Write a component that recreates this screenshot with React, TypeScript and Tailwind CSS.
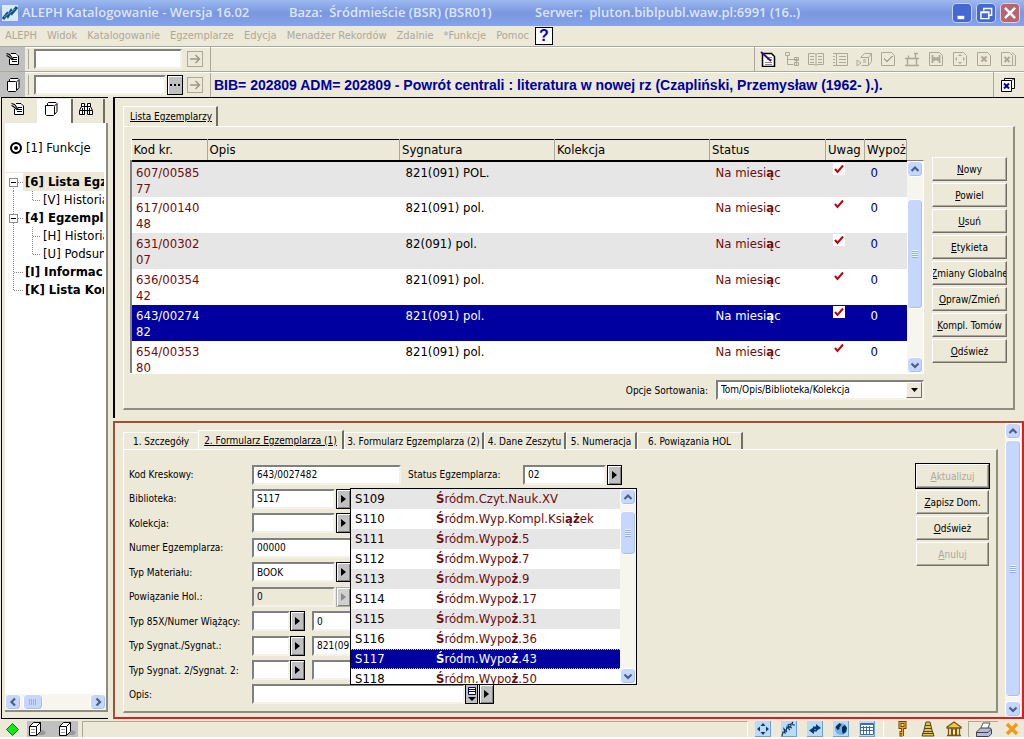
import React from "react";
import type { ReactNode } from "react";

const raised =
  "border border-t-white border-l-white border-r-[#716f64] border-b-[#716f64]";
const field =
  "h-5 min-w-0 rounded-none border-2 border-t-[#808080] border-l-[#808080] border-r-[#f4f2e8] border-b-[#f4f2e8] bg-white px-[3px] text-[10px] leading-4 text-black outline-none";

/* The raster UI font draws some Polish letters heavier than the rest. */
function Polish({ children }: { children: string }) {
  return (
    <>
      {children.split(/([ążŚ]+)/).map((part, i) =>
        i % 2 ? (
          <b key={i}>{part}</b>
        ) : (
          <React.Fragment key={i}>{part}</React.Fragment>
        ),
      )}
    </>
  );
}

function Svg({
  children,
  className = "size-4",
  box = "0 0 16 16",
}: {
  children: ReactNode;
  className?: string;
  box?: string;
}) {
  return (
    <svg
      viewBox={box}
      className={`shrink-0 ${className}`}
      fill="none"
      stroke="currentColor"
      strokeWidth="1"
      aria-hidden="true"
    >
      {children}
    </svg>
  );
}

const NoteIcon = () => (
  <Svg>
    <path d="M6 2.500h7.500v11h-9V8" fill="#fff" stroke="none" />
    <path d="M6 2.500h5l2.500 2.500v8.500h-9V8M8 6.500h4M7 8.500h5M7 10.500h5" />
    <path d="M1.500 2.500l3 1 4 5M1.500 4.500l2 1 4 3.500" strokeWidth="1.200" />
  </Svg>
);
const PagesIcon = () => (
  <Svg>
    <path d="M4.500 4.500v-2l1-1h7.500l1 1v8l-2 2.500" fill="#fff" />
    <path d="M2.500 4.500h8l1 1v8l-1 1h-7l-1-1z" fill="#fff" />
    <path d="M11.500 5l2-2" />
  </Svg>
);
const BinocularsIcon = () => (
  <Svg>
    <path d="M3.500 2.500h3v3h3v-3h3v3l2 4v4h-5v-4h-3v4h-5v-4l2-4z" fill="#fff" />
    <path d="M3 5.500h4M9 5.500h4M2 9.500h5M9 9.500h5M6.500 6v4M9.500 6v4M4.500 7v6M11.500 7v6" />
  </Svg>
);
const CubeIcon = () => (
  <Svg className="h-4 w-5" box="0 0 20 16">
    <path d="M11 14h6l2-3-4-2z" fill="#999" stroke="none" />
    <path d="M2.500 5.500l4-4h7v9l-4 4h-7z" fill="#fff" />
    <path d="M2.500 5.500h7v9M9.500 5.500l4-4" />
    <path d="M4 8.500h4M4 11.500h4" stroke="#999" />
  </Svg>
);

const toolbarIcons: { name: string; art: ReactNode }[] = [
  { name: "Drzewo", art: <path d="M1.500 1.500h4v3h-4zM3.500 5v8.500h6M4 8.500h6M10.500 6.500h4v3h-4zM10.500 11.500h4v3h-4zM12.500 6v9M10 8.500h5" /> },
  { name: "Książka", art: <path d="M.5 2.500h6l1.500 1 1.500-1h6v11h-6l-1.500 1-1.500-1h-6zM8 3v11M2 5.500h4M2 8.500h4M2 11.500h4M10 5.500h4M10 8.500h4M10 11.500h4" /> },
  { name: "Lista", art: <path d="M1 2.500h14.500v12H1M4.500 2v12M1 5.500h2M1 8.500h2M1 11.500h2M7 5.500h7M7 8.500h7M7 11.500h7" /> },
  { name: "Egzemplarz", art: <path d="M4.500 6.500l4-4h7v8l-3 4h-7M12.500 6.500l3-4M5 6.500h7.500v8M1 9l4 3-4 3zM7 9h3M7 11h3" /> },
  { name: "Sprawdź", art: <path d="M1.500 1.500h10l3 3v10h-13zM4 8l3 3 6-6M4 7l3 3 5-5" /> },
  { name: "Połącz", art: <path d="M1 7.500h14M3.500 8v6.500h9V8M4.500 7V4.500M11.500 7V2M10 2.500h4M1 14.500h4M11 14.500h4" strokeWidth="1.400" /> },
  { name: "Szukaj", art: <><path d="M1.500 1.500h10l3 3v10h-13z" /><path d="M4.500 4v8M11.500 4v8M6.500 6v4M9.500 6v4M6 8h4" strokeWidth="1.800" /></> },
  { name: "Przenieś", art: <><path d="M1.500 1.500h10l3 3v10h-13z" /><path d="M8 3l2 2H6zM8 13l2-2H6zM3 8l2-2v4zM13 8l-2-2v4z" fill="currentColor" stroke="none" /></> },
  { name: "Usuń", art: <><path d="M1.500 1.500h10l3 3v10h-13z" /><path d="M5.500 5.500l5 5M10.500 5.500l-5 5" strokeWidth="2" /></> },
  { name: "Usuń wszystkie", art: <><path d="M1.500 1.500h8l3 3v10h-11zM12 1.500l3.500 3v10h-2" /><path d="M4.500 6l5 5M9.500 6l-5 5" strokeWidth="2" /></> },
];

const xpBlue = "border border-white bg-[#c6d6fc] shadow-[inset_-1px_-1px_0_#a9bff0]";

function ScrollButton({ dir, label }: { dir: "up" | "down" | "left" | "right"; label: string }) {
  const d = {
    up: "M3.500 9L7 5.500 10.500 9",
    down: "M3.500 5.500L7 9l3.500-3.500",
    left: "M9 3.500L5.500 7 9 10.500",
    right: "M5.500 3.500L9 7l-3.500 3.500",
  }[dir];
  return (
    <button aria-label={label} className={`flex size-4 shrink-0 items-center justify-center rounded-sm ${xpBlue}`}>
      <Svg className="size-3.5" box="0 0 14 14">
        <path d={d} stroke="#45608c" strokeWidth="2.200" />
      </Svg>
    </button>
  );
}

function VScroll({ thumb }: { thumb: string }) {
  return (
    <div className="flex w-4 shrink-0 flex-col bg-[#f6f5ee]">
      <ScrollButton dir="up" label="W górę" />
      <div className="min-h-0 flex-1">
        <div className={`flex items-center justify-center rounded-sm ${xpBlue} ${thumb}`}>
          <Svg className="h-2 w-1.5" box="0 0 6 8">
            <path d="M0 .5h6M0 2.500h6M0 4.500h6M0 6.500h6" stroke="#eef4fe" />
            <path d="M0 1.500h6M0 3.500h6M0 5.500h6M0 7.500h6" stroke="#8cb0f8" />
          </Svg>
        </div>
      </div>
      <ScrollButton dir="down" label="W dół" />
    </div>
  );
}

function GoButton() {
  return (
    <button aria-label="Przejdź" className="flex size-4 items-center justify-center border border-[#aca899] text-[#9c998a]">
      <Svg className="size-3.5" box="0 0 14 14">
        <path d="M2 7h9M7.500 3l4 4-4 4" strokeWidth="1.500" />
      </Svg>
    </button>
  );
}

function PickButton({ label, disabled }: { label: string; disabled?: boolean }) {
  return (
    <button
      aria-label={label}
      disabled={disabled}
      className={`flex h-5 w-[15px] shrink-0 items-center justify-center border shadow-[inset_1px_1px_0_#fff,inset_-1px_-1px_0_#808080] ${
        disabled ? "border-[#aaa] bg-[#d0d0d0] text-[#8a8a8a]" : "border-black bg-[#c0c0c0] text-black"
      }`}
    >
      <Svg className="h-2 w-1.5" box="0 0 6 8">
        <path d="M0 0l5 4-5 4z" fill="currentColor" stroke="none" />
      </Svg>
    </button>
  );
}

function PushButton({ text, disabled, primary }: { text: string; disabled?: boolean; primary?: boolean }) {
  return (
    <button
      disabled={disabled}
      className={`flex h-6 w-full items-center justify-center overflow-hidden bg-[#ece9d8] text-[10px] whitespace-nowrap shadow-[inset_-1px_-1px_0_#aca899] ${raised} ${
        primary ? "outline outline-black" : ""
      } ${disabled ? "text-[#aca899]" : "text-black"}`}
    >
      <span>
        <u>{text[0]}</u>
        {text.slice(1)}
      </span>
    </button>
  );
}

const items = [
  ["607/00585", "77", "821(091) POL."],
  ["617/00140", "48", "821(091) pol."],
  ["631/00302", "07", "82(091) pol."],
  ["636/00354", "42", "821(091) pol."],
  ["643/00274", "82", "821(091) pol."],
  ["654/00353", "80", "821(091) pol."],
];

const branches = [
  ["S109", "Śródm.Czyt.Nauk.XV"],
  ["S110", "Śródm.Wyp.Kompl.Książek"],
  ["S111", "Śródm.Wypoż.5"],
  ["S112", "Śródm.Wypoż.7"],
  ["S113", "Śródm.Wypoż.9"],
  ["S114", "Śródm.Wypoż.17"],
  ["S115", "Śródm.Wypoż.31"],
  ["S116", "Śródm.Wypoż.36"],
  ["S117", "Śródm.Wypoż.43"],
  ["S118", "Śródm.Wypoż.50"],
];

const tree = [
  { text: "[6] Lista Egz", art: "box", root: true, active: true },
  { text: "[V] Historia", art: "last" },
  { text: "[4] Egzempla", art: "box", root: true },
  { text: "[H] Historia", art: "mid" },
  { text: "[U] Podsum", art: "last" },
  { text: "[I] Informac", art: "leaf", root: true },
  { text: "[K] Lista Kon", art: "end", root: true },
];

function TreeArt({ kind, first }: { kind: string; first?: boolean }) {
  const child = kind === "mid" || kind === "last";
  return (
    <Svg className={child ? "h-[18px] w-9" : "h-[18px] w-[18px]"} box={child ? "0 0 36 18" : "0 0 18 18"}>
      <g stroke="#8c8c8c" strokeDasharray="1 1">
        <path d={first ? "M8.500 9v9" : kind === "end" ? "M8.500 0v9" : "M8.500 0v18"} />
        {child ? (
          <path d={kind === "mid" ? "M27.500 0v18M28 9.500h8" : "M27.500 0v9M28 9.500h8"} />
        ) : (
          <path d="M9 9.500h9" />
        )}
      </g>
      {kind === "box" && (
        <>
          <rect x="4.500" y="5.500" width="8" height="8" fill="#fff" stroke="#8c8c8c" />
          <path d="M6 9.500h5" stroke="#000" />
        </>
      )}
    </Svg>
  );
}

const menu = ["ALEPH", "Widok", "Katalogowanie", "Egzemplarze", "Edycja", "Menadżer Rekordów", "Zdalnie", "*Funkcje", "Pomoc"];

function TitleBar() {
  return (
    <header className="flex h-[26px] items-center bg-linear-to-b from-[#9db9f0] via-[#7a96df] to-[#85a4ec] pr-1 pl-0.5 font-['Open_Sans',sans-serif] text-[13px] font-semibold whitespace-pre text-[#dbe7fb]">
      <Svg className="size-4">
        <rect width="16" height="16" fill="#d5ecf8" stroke="none" />
        <path d="M1 14l4-5 1 2 3-5 1 2 5-6" stroke="#164f83" strokeWidth="3" />
        <path d="M2 12l11-8" stroke="#67a5d0" />
      </Svg>
      <h1 className="flex flex-1">
        <span className="w-[267px] pl-1">ALEPH Katalogowanie - Wersja 16.02</span>
        <span className="w-[246px] pl-1">Baza:  Śródmieście (BSR) (BSR01)</span>
        <span className="pl-1">Serwer:  pluton.biblpubl.waw.pl:6991 (16..)</span>
      </h1>
      <div className="flex gap-1">
        <button aria-label="Minimalizuj" className="size-5 rounded-sm border border-[#c5d4f7] bg-[#4668d2]">
          <Svg className="size-[18px]"><path d="M4 12h6" stroke="#fff" strokeWidth="3" /></Svg>
        </button>
        <button aria-label="Przywróć" className="size-5 rounded-sm border border-[#c5d4f7] bg-[#4668d2]">
          <Svg className="size-[18px]"><path d="M6 6V4h7v6h-2M3.500 7h7v6h-7zM3 7.500h8" stroke="#fff" strokeWidth="1.300" /></Svg>
        </button>
        <button aria-label="Zamknij" className="size-5 rounded-sm border border-[#e3cfdc] bg-[#b6646e]">
          <Svg className="size-[18px]"><path d="M3.500 3.500l9 9M12.500 3.500l-9 9" stroke="#fff" strokeWidth="2.200" /></Svg>
        </button>
      </div>
    </header>
  );
}

const line = "border-b border-[#aca899] shadow-[0_1px_0_#fff]";

function Toolbars() {
  return (
    <>
      <nav className={`flex h-[21px] items-center gap-2.5 pl-[5px] text-[11px] whitespace-nowrap text-[#aca899] ${line}`}>
        {menu.map((m) => (
          <button key={m}>{m}</button>
        ))}
        <button aria-label="Kontekstowa" className="-ml-1 flex size-[18px] items-center justify-center border border-black bg-white font-['Liberation_Sans',sans-serif] text-base font-bold text-[#0000c0]">
          ?
        </button>
      </nav>
      <div className={`flex h-[25px] items-center ${line}`}>
        <span className="flex h-full w-[25px] items-center justify-center bg-[#c0c0c0]"><NoteIcon /></span>
        <span className="ml-[3px] h-5 w-px bg-[#aca899]" />
        <input aria-label="Rekord" className={`mr-[5px] ml-[5px] w-[148px] ${field}`} />
        <GoButton />
        <span className="ml-[7px] h-6 w-px bg-[#aca899]" />
        <div className="ml-auto flex h-full items-center gap-2 border-l border-[#aca899] pr-2 pl-[5px] text-[#aca899]">
          <button aria-label="Edytuj" className="text-black">
            <Svg>
              <path d="M2.500 2.500h9l3 3v10h-12z" fill="#fff" strokeWidth="1.500" />
              <path d="M6 6.500h6M7 8.500h5M5 11.500h7M5 13.500h7" stroke="#888" />
              <path d="M1 1l10 9" stroke="#3a1080" strokeWidth="2" />
            </Svg>
          </button>
          {toolbarIcons.map((t) => (
            <button key={t.name} aria-label={t.name} disabled><Svg>{t.art}</Svg></button>
          ))}
        </div>
      </div>
      <div className="flex h-[25px] items-center">
        <span className="flex h-full w-[25px] items-center justify-center bg-[#c0c0c0]"><PagesIcon /></span>
        <span className="ml-[3px] h-5 w-px bg-[#aca899]" />
        <input aria-label="Egzemplarz" className={`ml-[5px] w-[132px] ${field}`} />
        <button aria-label="Wybierz" className="mr-1 ml-px flex h-5 w-4 items-center justify-center border border-black bg-[#c0c0c0] shadow-[inset_1px_1px_0_#fff]">
          <Svg className="size-3" box="0 0 12 12"><path d="M1 6h2M5 6h2M9 6h2" strokeWidth="2" /></Svg>
        </button>
        <GoButton />
        <span className="ml-[7px] h-6 w-px bg-[#aca899]" />
        <p className="pl-[3px] font-['Liberation_Sans',sans-serif] text-sm font-bold whitespace-nowrap text-[#0000a0]">
          BIB= 202809 ADM= 202809 - Powrót centrali : literatura w nowej rz (Czapliński, Przemysław (1962- ).).
        </p>
        <div className="ml-auto flex h-full items-center border-l border-[#aca899] pr-2 pl-1.5">
          <button aria-label="Zamknij rekord">
            <Svg>
              <path d="M4.500 3.500v-2h10v10h-3M1.500 3.500h10v11h-10zM12 3.500l2-2" fill="#fff" />
              <path d="M4 6.500l5 5M9 6.500l-5 5" stroke="#0000a0" strokeWidth="2" />
            </Svg>
          </button>
        </div>
      </div>
    </>
  );
}

function Navigator() {
  return (
    <aside className="flex w-[107px] shrink-0 flex-col border-t border-b border-l border-black">
      <div className="flex flex-1 flex-col pb-1.5 pl-[3px]">
        <div className="flex h-[25px] pt-px">
          <button aria-label="Rekord" className="w-8 pb-1 pl-[5px]"><NoteIcon /></button>
          <button aria-label="Egzemplarze" className="w-9 border-r-2 border-[#716f64] bg-white pb-1 pl-1.5"><PagesIcon /></button>
          <button aria-label="Szukaj" className="w-8 border-r-2 border-[#716f64] pb-1 pl-[5px]"><BinocularsIcon /></button>
        </div>
        <div className="flex flex-1 flex-col border-r-2 border-b-2 border-[#8f8d80] bg-white">
          <label className="mt-4 flex h-[18px] items-center gap-1 pl-[5px] text-[13px]">
            <input
              type="radio"
              name="funkcje"
              defaultChecked
              className="size-3 shrink-0 appearance-none rounded-full border-2 border-black bg-black shadow-[inset_0_0_0_2px_#fff]"
            />
            [1] Funkcje
          </label>
          <ul className="mt-[15px] w-[99px] flex-1 overflow-hidden border-t border-[#ece9d8] text-[13px]">
            {tree.map((t, i) => (
              <li key={t.text} className={`flex h-[18px] items-center whitespace-nowrap ${t.root ? "font-bold" : ""}`}>
                <TreeArt kind={t.art} first={i === 0} />
                <a href="#" className={`flex-1 pl-0.5 leading-[18px] ${t.active ? "bg-[#ece9d8]" : ""}`}>{t.text}</a>
              </li>
            ))}
          </ul>
          <div className="flex h-4 bg-[#f6f5ee]">
            <ScrollButton dir="left" label="W lewo" />
            <div className={`ml-0.5 flex w-5 items-center justify-center rounded-sm ${xpBlue}`}>
              <Svg className="h-1.5 w-2" box="0 0 8 6"><path d="M.5 0v6M2.500 0v6M4.500 0v6M6.500 0v6" stroke="#8cb0f8" /></Svg>
            </div>
            <span className="flex-1" />
            <ScrollButton dir="right" label="W prawo" />
          </div>
        </div>
      </div>
    </aside>
  );
}

const groupBox = "border-t border-l border-r-2 border-b-2 border-t-white border-l-white border-r-[#8f8d80] border-b-[#8f8d80]";

function ItemList() {
  const head = "border-r border-r-[#aca899] border-l border-l-white pl-0.5 text-left font-normal";
  return (
    <section className="border-t border-l-2 border-black pt-2 pr-[9px] pb-2 pl-2">
      <div className="flex">
        <button className="h-5 border-t border-r-2 border-l border-t-white border-r-[#716f64] border-l-white pr-1 pl-1.5 text-[10px] underline">
          Lista Egzemplarzy
        </button>
      </div>
      <div className={`flex gap-2 px-1.5 pt-3 pb-2 ${groupBox}`}>
        <div className="min-w-0 flex-1">
          <div className="flex h-[235px] border-b border-white">
            <div className="min-w-0 flex-1 overflow-hidden">
              <table className="w-full table-fixed border-collapse text-[13px]">
                <colgroup>
                  <col className="w-[76px]" />
                  <col />
                  <col className="w-[155px]" />
                  <col className="w-[155px]" />
                  <col className="w-[116px]" />
                  <col className="w-[39px]" />
                  <col className="w-[42px]" />
                </colgroup>
                <thead>
                  <tr className="h-[21px] border border-b-2 border-black leading-[17px] whitespace-nowrap">
                    {["Kod kr.", "Opis", "Sygnatura", "Kolekcja", "Status", "Uwag", "Wypoż"].map((h) => (
                      <th key={h} className={head}>{h}</th>
                    ))}
                  </tr>
                </thead>
                <tbody>
                  {items.map(([a, b, sig], i) => {
                    const sel = i === 4;
                    return (
                      <tr
                        key={a}
                        className={`h-9 align-top leading-4 ${
                          sel ? "bg-[#0000a0] text-white" : i % 2 ? "bg-white text-[#6e0d0d]" : "bg-[#e6e6e6] text-[#6e0d0d]"
                        }`}
                      >
                        <td className="border-l-2 border-[#808080] pt-[3px] pl-1">{a}<br />{b}</td>
                        <td />
                        <td className={`pt-[3px] pl-1.5 ${sel ? "" : "text-black"}`}>{sig}</td>
                        <td />
                        <td className="pt-[3px] pl-1.5"><Polish>Na miesiąc</Polish></td>
                        <td className="pt-px pl-[7px]">
                          <Svg className="size-3 bg-white" box="0 0 12 12">
                            <path d="M2 6l2.500 3L10 2.500" stroke="#c00010" strokeWidth="2" />
                          </Svg>
                        </td>
                        <td className={`pt-[3px] pl-1.5 ${sel ? "" : "text-[#000070]"}`}>0</td>
                      </tr>
                    );
                  })}
                </tbody>
              </table>
            </div>
            <div className="mt-[21px] flex border-t border-r border-t-[#808080] border-r-white">
              <VScroll thumb="mt-[22px] h-[110px]" />
            </div>
          </div>
          <div className="mt-1.5 flex items-center justify-end gap-2 text-[10px]">
            <label htmlFor="sort">Opcje Sortowania:</label>
            <div className="relative">
              <select id="sort" className={`w-[208px] appearance-none ${field}`}>
                <option>Tom/Opis/Biblioteka/Kolekcja</option>
              </select>
              <span className={`pointer-events-none absolute top-0.5 right-0.5 flex h-4 w-4 items-center justify-center bg-[#ece9d8] ${raised}`}>
                <Svg className="h-1 w-[7px]" box="0 0 7 4"><path d="M0 0h7L3.500 4z" fill="#000" stroke="none" /></Svg>
              </span>
            </div>
          </div>
        </div>
        <div className="mt-[18px] flex w-[75px] shrink-0 flex-col gap-0.5">
          {["Nowy", "Powiel", "Usuń", "Etykieta", "Zmiany Globalne", "Opraw/Zmień", "Kompl. Tomów", "Odśwież"].map((b) => (
            <PushButton key={b} text={b} />
          ))}
        </div>
      </div>
    </section>
  );
}

function Row({ id, label, children }: { id: string; label: string; children: ReactNode }) {
  return (
    <div className="flex h-[21px] items-center">
      <label htmlFor={id} className="w-[123px] shrink-0 whitespace-nowrap">{label}</label>
      {children}
    </div>
  );
}

const tabs = [
  { text: "1. Szczegóły", cls: "w-[75px]" },
  { text: "2. Formularz Egzemplarza (1)", cls: "w-[146px]" },
  { text: "3. Formularz Egzemplarza (2)", cls: "w-[140px]" },
  { text: "4. Dane Zeszytu", cls: "w-[82px]" },
  { text: "5. Numeracja", cls: "w-[71px]" },
  { text: "6. Powiązania HOL", cls: "w-[106px]" },
];

function BranchPopup() {
  return (
    <div className="absolute top-[38px] left-[226px] flex h-[197px] w-[287px] border border-black bg-white">
      <ul role="listbox" aria-label="Biblioteki" className="min-w-0 flex-1 overflow-hidden text-[13px]">
        {branches.map(([code, name], i) => {
          const sel = code === "S117";
          return (
            <li
              key={code}
              role="option"
              aria-selected={sel}
              className={`flex h-5 items-center pl-1 whitespace-nowrap ${
                sel ? "border-y border-dotted border-[#c0c0ff] bg-[#0000a0] text-white" : i % 2 ? "bg-white" : "bg-[#e6e6e6]"
              }`}
            >
              <span className="w-[81px]">{code}</span>
              <span className={sel ? "" : "text-[#6e0d0d]"}><Polish>{name}</Polish></span>
            </li>
          );
        })}
      </ul>
      <VScroll thumb="mt-1.5 h-11" />
    </div>
  );
}

function ItemForm() {
  return (
    <section className="mt-[3px] flex flex-1 border-2 border-t-[#9c5236] border-r-[#d8201c] border-b-[#d8201c] border-l-[#9c5236] pr-px text-[10px]">
      <div className="flex min-w-0 flex-1 flex-col pt-2 pr-[7px] pb-1 pl-2">
        <div className="flex h-[18px] items-end">
          {tabs.map((t, i) => (
            <button
              key={t.text}
              className={`shrink-0 whitespace-nowrap border-t border-l border-t-white border-l-white ${t.cls} ${
                i === 1 ? "h-[19px] underline" : "h-[17px]"
              } ${i > 0 ? "border-r-2 border-r-[#716f64]" : ""}`}
            >
              {t.text}
            </button>
          ))}
        </div>
        <div className={`relative flex flex-1 justify-between px-[5px] pt-3.5 ${groupBox}`}>
          <div className="flex h-[241px] flex-col justify-between">
            <Row id="kod" label="Kod Kreskowy:">
              <input id="kod" defaultValue="643/0027482" className={`w-[149px] ${field}`} />
              <label htmlFor="status" className="w-[118px] pl-[7px] whitespace-nowrap">Status Egzemplarza:</label>
              <input id="status" defaultValue="02" className={`mr-px ml-1 w-[83px] ${field}`} />
              <PickButton label="Wybierz status" />
            </Row>
            <Row id="bib" label="Biblioteka:">
              <input id="bib" defaultValue="S117" className={`mr-px w-[83px] ${field}`} />
              <PickButton label="Wybierz bibliotekę" />
            </Row>
            <Row id="kol" label="Kolekcja:">
              <input id="kol" className={`mr-px w-[83px] ${field}`} />
              <PickButton label="Wybierz kolekcję" />
            </Row>
            <Row id="num" label="Numer Egzemplarza:">
              <input id="num" defaultValue="00000" className={`w-[149px] ${field}`} />
            </Row>
            <Row id="mat" label="Typ Materiału:">
              <input id="mat" defaultValue="BOOK" className={`mr-px w-[83px] ${field}`} />
              <PickButton label="Wybierz materiał" />
            </Row>
            <Row id="hol" label="Powiązanie Hol.:">
              <input id="hol" defaultValue="0" disabled className={`mr-px w-[83px] ${field} bg-[#ece9d8]!`} />
              <PickButton label="Wybierz powiązanie" disabled />
            </Row>
            <Row id="t85" label="Typ 85X/Numer Wiążący:">
              <input id="t85" className={`w-[38px] ${field}`} />
              <PickButton label="Wybierz typ" />
              <input aria-label="Numer wiążący" defaultValue="0" className={`ml-[7px] w-[149px] ${field}`} />
            </Row>
            <Row id="syg" label="Typ Sygnat./Sygnat.:">
              <input id="syg" className={`w-[38px] ${field}`} />
              <PickButton label="Wybierz typ sygnatury" />
              <input aria-label="Sygnatura" defaultValue="821(091) pol." className={`ml-[7px] w-[149px] ${field}`} />
            </Row>
            <Row id="syg2" label="Typ Sygnat. 2/Sygnat. 2:">
              <input id="syg2" className={`w-[38px] ${field}`} />
              <PickButton label="Wybierz typ sygnatury 2" />
              <input aria-label="Sygnatura 2" className={`ml-[7px] w-[149px] ${field}`} />
            </Row>
            <Row id="opis" label="Opis:">
              <input id="opis" className={`w-[213px] ${field}`} />
              <button aria-label="Rozwiń opis" className="mr-px flex h-5 w-[13px] items-center justify-center border border-black bg-[#c0c0c0]">
                <Svg className="h-4 w-2" box="0 0 8 16">
                  <path d="M.5 1.500h7v7h-7zM1 3.500h6M1 5.500h6" fill="#fff" stroke="#000070" />
                  <path d="M0 11h8l-4 4z" fill="#000" stroke="none" />
                </Svg>
              </button>
              <PickButton label="Wybierz opis" />
            </Row>
          </div>
          <div className="flex w-[75px] shrink-0 flex-col gap-0.5 pr-0.5">
            <PushButton text="Aktualizuj" disabled primary />
            <PushButton text="Zapisz Dom." />
            <PushButton text="Odśwież" />
            <PushButton text="Anuluj" disabled />
          </div>
          <BranchPopup />
        </div>
      </div>
      <VScroll thumb="mt-px h-[257px]" />
    </section>
  );
}

const statusArt: { name: string; art: ReactNode }[] = [
  { name: "Przesuń", art: <path d="M8 2l2.500 3h-5zM8 14l2.500-3h-5zM2 8l3-2.500v5zM14 8l-3-2.500v5z" fill="#0d3a75" stroke="none" /> },
  { name: "MARC", art: <path d="M1 15l1-4 2 1-1-4 3 3M5 10l1-4 3 3M8 7l-1-3 3-1 0 2-2 1 3 1M14 4l-2 0-1-2 1-1" stroke="#173e66" strokeWidth="1.200" /> },
  { name: "Wymiana", art: <path d="M6 5.500h3V3l5 4-5 3V8H6zM10 10.500H7V13L2 9.500 7 6v2.500h3z" fill="#0d3a75" stroke="none" /> },
  { name: "Sieć", art: <><circle cx="8" cy="8" r="6" fill="#6fb2e4" stroke="none" /><path d="M2.500 6l4-4 2 2-2 2 0 2-2 1zM9 6l3-2 2 3-1 4-3 2-1-3z" fill="#0a2d55" stroke="none" /></> },
  { name: "Kalendarz", art: <><path d="M1.500 2.500h13v11h-13z" fill="#fff" stroke="#3a6ea0" /><path d="M1.500 3.500h13M2 6.500h12M2 9.500h12M4.500 5v8M7.500 5v8M10.500 5v8" stroke="#3a6ea0" /></> },
];

function StatusBar() {
  return (
    <footer className="mt-px flex h-4 items-center">
      <span className="flex w-6 justify-center">
        <Svg className="h-[13px] w-[13px]" box="0 0 13 13"><path d="M6.500.5l6 6-6 6-6-6z" fill="#10e810" stroke="#187018" /></Svg>
      </span>
      <span className="ml-[3px] flex h-full w-[51px] gap-2.5 bg-[#c0c0c0]"><CubeIcon /><CubeIcon /></span>
      <span className="ml-1 h-full flex-1 border-t border-r border-l border-t-[#aca899] border-r-white border-l-[#aca899]" />
      <div className="flex gap-2.5 pl-[7px]">
        {statusArt.map((s) => (
          <button key={s.name} aria-label={s.name} className="size-4 bg-[#b9dbf5] shadow-[inset_-1px_-1px_0_#6ba3d2]">
            <Svg>{s.art}</Svg>
          </button>
        ))}
      </div>
      <div className="ml-2 flex h-full items-center gap-2.5 border-l border-white pl-2.5">
        <Svg>
          <path d="M6 1.500h5v5H6zM8.500 6v9M9 11.500H5.500M9 14H5.500" stroke="#6b4500" strokeWidth="3" />
          <path d="M6 1.500h5v5H6zM8.500 6v9M9 11.500H6M9 14H6" stroke="#f0a818" strokeWidth="1.200" />
        </Svg>
        <Svg><path d="M6 1h4l1 4 1 4 2 6H2l2-6 1-4z" fill="#e0c050" stroke="#55481c" /><path d="M5 4.500h6M4 7.500h8M3 10.500h10M2.500 12.500h11" stroke="#55481c" /></Svg>
        <Svg><path d="M1 6l7-5 7 5v1H1zM2.500 7v7M5.500 7v7M10.500 7v7M13.500 7v7M1 14.500h14" fill="#f2c84a" stroke="#7a5410" strokeWidth="1.300" /><path d="M6.500 8h3v6h-3z" fill="#fff0a0" stroke="#7a5410" /></Svg>
      </div>
      <span className="ml-1.5 flex h-full w-[30px] items-center justify-center border-t border-l border-[#aca899]">
        <Svg className="h-4 w-[18px]" box="0 0 18 16">
          <path d="M6 6l2-5h7l-2 5" fill="#fff" stroke="#555" />
          <path d="M1.500 10l4-4h10l1 2v4l-3 2.500h-12z" fill="#b4badc" stroke="#444" />
          <path d="M2 10.500h11l3-3" stroke="#444" />
        </Svg>
      </span>
      <Svg className="mr-1 ml-1.5 size-4"><path d="M3 3l10 10M13 3L3 13" stroke="#f09a18" strokeWidth="3.500" /></Svg>
    </footer>
  );
}

export default function App() {
  return (
    <div className="flex min-h-screen flex-col bg-white pb-0.5 font-['DejaVu_Sans_Condensed','DejaVu_Sans',sans-serif] text-black">
      <div className="flex flex-1 flex-col bg-[#ece9d8]">
        <TitleBar />
        <Toolbars />
        <main className="flex flex-1 gap-[5px] pb-px pl-px">
          <Navigator />
          <div className="flex min-w-0 flex-1 flex-col">
            <ItemList />
            <ItemForm />
          </div>
        </main>
        <StatusBar />
      </div>
    </div>
  );
}
